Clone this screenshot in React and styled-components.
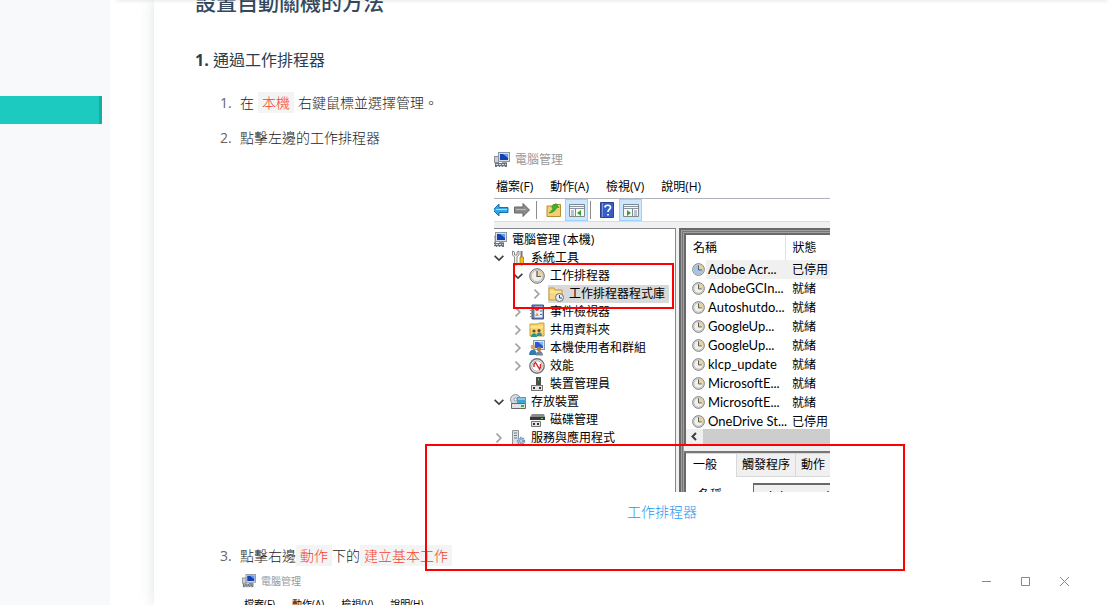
import React from 'react'
import styled, { createGlobalStyle, css } from 'styled-components'

const GlobalStyle = createGlobalStyle`
	* {
		box-sizing: border-box;
	}
	body {
		margin: 0;
		background: #fff;
		font-family: 'Open Sans', 'Noto Sans CJK TC', sans-serif;
	}
	button,
	input {
		font: inherit;
		color: inherit;
	}
	svg {
		display: block;
		flex: none;
	}
`

/* ---------- page ---------- */

const Page = styled.div`
	position: relative;
	display: flex;
	height: 100vh;
	overflow: hidden;
`

const TopShadow = styled.div`
	position: absolute;
	top: -4px;
	left: 116px;
	right: 0;
	height: 4px;
	box-shadow: 0 0 5px rgba(0, 0, 0, 0.14);
	z-index: 2;
`

const Sidebar = styled.nav`
	flex: none;
	width: 110px;
	padding: 96px 8px 0 0;
	background: #f7f9fb;
`

const ActiveLink = styled.a`
	display: block;
	height: 28px;
	background: #1ccac0;
	border-right: 3px solid #1aaba2;
`

const Article = styled.main`
	flex: 1;
	min-width: 0;
	margin-left: 44px;
	padding: 0 24px 0 41px;
	background: #fff;
	box-shadow: 0 0 14px rgba(50, 80, 80, 0.16);
`

const Title = styled.h2`
	margin: -12px 0 0;
	font-size: 21px;
	line-height: 28px;
	font-weight: 500;
	color: #34495e;
`

const Subtitle = styled.h3`
	margin: 32px 0 0;
	font-size: 16px;
	line-height: 24px;
	font-weight: 400;
	color: #2c3e50;

	b {
		font-weight: 700;
	}
`

const Steps = styled.ol`
	margin: 20px 0 0;
	padding: 0 0 0 25px;
	list-style: none;
	counter-reset: step;
`

const Step = styled.li`
	display: flex;
	counter-increment: step;
	font-size: 14px;
	line-height: 22px;
	font-weight: 300;
	color: #222;
	margin-bottom: ${(p) => p.$gap || 0}px;

	&::before {
		content: counter(step) '.';
		flex: none;
		width: 20px;
		font-weight: 400;
		color: #666;
	}
`

const StepBody = styled.div`
	flex: 1;
	min-width: 0;
`

const Code = styled.code`
	padding: 1px 4px;
	margin: 0 ${(p) => (p.$spaced ? 4 : 0)}px;
	background: #f3f4f4;
	color: #f5412f;
	font-family: inherit;
`

const Figure = styled.figure`
	display: flex;
	flex-direction: column;
	align-items: center;
	margin: 0;
`

const Caption = styled.figcaption`
	margin-top: 6px;
	line-height: 28px;
	color: #1e98f0;
`

const Shot = styled.div`
	position: relative;
	width: 336px;
`

const Mark = styled.div`
	position: absolute;
	left: ${(p) => p.$x}px;
	top: ${(p) => p.$y}px;
	width: ${(p) => p.$w}px;
	height: ${(p) => p.$h}px;
	border: 2px solid #f00;
	pointer-events: none;
`

/* ---------- management console ---------- */

const Window = styled.div`
	display: flex;
	flex-direction: column;
	height: 343px;
	overflow: hidden;
	background: #fff;
	color: #000;
	font-size: 12px;
	line-height: 18px;
	font-weight: 400;
`

const TitleBar = styled.div`
	display: flex;
	align-items: center;
	gap: 5px;
	height: ${(p) => (p.$small ? 28 : 22)}px;
	padding-left: ${(p) => (p.$small ? 2 : 0)}px;
	color: #999;
	font-size: ${(p) => (p.$small ? 10 : 12)}px;
	font-weight: 400;
`

const Menu = styled.div`
	display: flex;
	align-items: center;
	gap: 17px;
	height: ${(p) => (p.$small ? 18 : 27)}px;
	padding: ${(p) => (p.$small ? '0 0 0 4px' : '4px 0 0 2px')};
	font-size: ${(p) => (p.$small ? 10 : 12)}px;
	font-weight: 400;
	color: #000;
`

const MenuItem = styled.button`
	padding: 0;
	border: 0;
	background: none;
	white-space: nowrap;
`

const Toolbar = styled.div`
	display: flex;
	align-items: center;
	height: 24px;
	border-top: 1px solid #aeb0ba;
	border-bottom: 1px solid #dcdcdc;
`

const Tool = styled.button`
	display: flex;
	align-items: center;
	justify-content: center;
	width: ${(p) => p.$w || 23}px;
	height: 22px;
	padding: 0;
	border: 1px solid ${(p) => (p.$on ? '#99d1ff' : 'transparent')};
	background: ${(p) => (p.$on ? '#cce8ff' : 'none')};
`

const Divider = styled.span`
	width: 1px;
	height: 18px;
	margin: 0 ${(p) => p.$right}px 0 ${(p) => p.$left}px;
	background: #8c8c8c;
`

const Panes = styled.div`
	display: flex;
	flex: 1;
	min-height: 0;
	padding-top: 6px;
	background: #f0f0f0;
`

const Tree = styled.ul`
	flex: none;
	width: 182px;
	margin: 0;
	padding: 2px 0 0;
	list-style: none;
	background: #fff;
	border-top: 1px solid #828790;
	border-right: 1px solid #828790;
`

const TreeRow = styled.li`
	display: flex;
	align-items: center;
	height: 18px;
	margin-left: -3px;
	padding-left: ${(p) => Math.max(p.$level - 1, 0) * 19}px;
	white-space: nowrap;
`

const Twisty = styled.span`
	flex: none;
	display: flex;
	justify-content: center;
	width: 16px;
	margin-right: 3px;
`

const Node = styled.span`
	display: flex;
	align-items: center;
	gap: 5px;
	height: 18px;
	${(p) =>
		p.$selected &&
		css`
			background: #d9d9d9;
			padding-right: 4px;
		`}
`

const Detail = styled.div`
	flex: 1;
	min-width: 0;
	display: flex;
	flex-direction: column;
	margin-left: 3px;
	border-left: 2px solid #696969;
	border-top: 2px solid #696969;
`

const Bevel = styled.div`
	flex: 1;
	min-height: 0;
	display: flex;
	flex-direction: column;
	padding: 5px 0 0 5px;
	background: #fff;
	box-shadow: inset 1px 1px #a0a0a0, inset 2px 2px #777, inset 3px 3px #a0a0a0,
		inset 5px 5px #696969;
`

const Tasks = styled.table`
	width: 100%;
	table-layout: fixed;
	border-collapse: collapse;
	font-size: 13px;
	font-family: Lato, 'Noto Sans CJK TC', sans-serif;

	th {
		height: 25px;
		padding: 0 0 0 7px;
		font-size: 12px;
		font-weight: 400;
		text-align: left;
	}
	th:first-child {
		width: 99px;
		border-right: 1px solid #e0e0e0;
	}
	td {
		height: 19px;
		padding: 0 0 0 6px;
		line-height: 19px;
		white-space: nowrap;
	}
	td + td {
		padding-left: 7px;
		font-size: 12px;
	}
`

const TaskRow = styled.tr`
	td + td,
	td span {
		background: ${(p) => (p.$selected ? '#f0f0f0' : 'none')};
	}
`

const TaskName = styled.div`
	display: flex;
	align-items: center;
	gap: 1px;

	span {
		flex: 1;
		padding-left: 2px;
	}
`

const ScrollBar = styled.div`
	flex: none;
	display: flex;
	align-items: center;
	height: 15px;
	margin-top: -2px;
	background: #f0f0f0;

	svg {
		margin: 0 4px;
	}
`

const Thumb = styled.div`
	flex: 1;
	align-self: stretch;
	background: #cdcdcd;
`

const Splitter = styled.div`
	flex: none;
	height: 9px;
	margin-left: -2px;
	background: #f0f0f0;
	border-top: 1px solid #fff;
	border-bottom: 2px solid #777;
`

const Tabs = styled.div`
	flex: none;
	display: flex;
	align-items: flex-start;
	height: 30px;
`

const Tab = styled.button`
	flex: none;
	height: 24px;
	padding: 0 5px;
	border: 1px solid #d9d9d9;
	border-left-width: 0;
	background: #f0f0f0;
	line-height: 20px;
	${(p) =>
		p.$active &&
		css`
			width: 51px;
			padding: 0 0 2px 7px;
			text-align: left;
			background: #fff;
			border-bottom: 0;
		`}
`

const Field = styled.label`
	display: flex;
	flex: none;
	align-items: center;
	padding-left: 12px;
	white-space: nowrap;

	input {
		flex: none;
		width: 120px;
		height: 24px;
		margin-left: 31px;
		padding: 0 2px;
		border: 1px solid #696969;
		border-width: 2px 1px 1px;
		background: #f0f0f0;
		font-size: 13px;
	}
`

const Caret = styled.div`
	display: flex;
	align-items: center;
	justify-content: space-between;
`

const WindowButtons = styled.div`
	display: flex;
	align-items: center;
	gap: 28px;
	padding-right: 14px;
	color: #888;

	button {
		padding: 0;
		border: 0;
		background: none;
	}
`

/* ---------- icons ---------- */

const Svg = ({ size = 16, children }) => (
	<svg width={size} height={size} viewBox='0 0 16 16' fill='none' aria-hidden='true'>
		{children}
	</svg>
)

const ComputerIcon = ({ size }) => (
	<Svg size={size}>
		<rect x='4.5' y='.5' width='11' height='9' fill='#d9dde4' stroke='#8d96a4' />
		<rect x='6' y='2' width='8' height='6' fill='#1440b4' />
		<path d='M9 2h5v4z' fill='#5ea0f0' />
		<path d='M8 10h5v2H8z' fill='#9aa2ae' />
		<rect x='.5' y='4.5' width='4' height='6' fill='#ccd1d8' stroke='#89919e' />
		<path d='M1 11h12v4H1z' fill='#68717d' />
		<path d='M2 12.5h10M3 14.5h8' stroke='#d8dde2' strokeDasharray='2 1' />
	</Svg>
)

const ToolsIcon = () => (
	<Svg>
		<path d='M2.5 1v4l2 2v8h2.500V7l2-2V1L7 2v3H4.500V2z' fill='#eee' stroke='#777' strokeWidth='.8' />
		<path d='M11.5 1v6' stroke='#777' strokeWidth='2' />
		<path d='M10 7h3.5v7l-2 1.5L10 14z' fill='#f4bd18' stroke='#a87509' strokeWidth='.7' />
	</Svg>
)

const ClockIcon = ({ size = 16, face = '#f3f0e8' }) => (
	<Svg size={size}>
		<circle cx='8' cy='8' r='7.3' fill='#d4d4d4' stroke='#777' />
		<circle cx='8' cy='8' r='5.6' fill={face} stroke='#aaa' strokeWidth='.6' />
		<path d='M8 8V2.4A5.6 5.6 0 0 1 13.6 8z' fill='#f1d28c' />
		<path d='M8 3v5.5h4' stroke='#4c5a6b' strokeWidth='1.2' />
	</Svg>
)

const FolderClockIcon = () => (
	<Svg>
		<path d='M1 2h5l1 2h7v10H1z' fill='#f7d680' stroke='#c99b38' />
		<path d='M1.5 6h12' stroke='#fff0b8' />
		<circle cx='11.5' cy='11.5' r='4' fill='#e9edf0' stroke='#66717d' />
		<path d='M11.5 9v3h2.5' stroke='#35485d' />
	</Svg>
)

const EventIcon = () => (
	<Svg>
		<path d='M3 1h11.500v14H3z' fill='#5d78b8' stroke='#41578c' />
		<path d='M5.500 2.500h8v11h-8z' fill='#eef2f8' />
		<path d='M1 3.500h3M1 6.500h3M1 9.500h3M1 12.500h3' stroke='#888' />
		<circle cx='8' cy='5' r='2' fill='#d53232' />
		<path d='M8 8.500l2 3.500H6z' fill='#e4a51f' />
		<path d='M11 4.500h2M11 7h2M11 10.500h2' stroke='#3e62b6' />
	</Svg>
)

const SharedIcon = () => (
	<Svg>
		<path d='M1 2h8l1-1h5v13H1z' fill='#f7d66c' stroke='#c99d35' />
		<path d='M1 5h13' stroke='#fff1b5' />
		<circle cx='5' cy='9' r='1.6' fill='#6b4a2c' />
		<circle cx='10' cy='8.5' r='1.6' fill='#6b4a2c' />
		<path d='M2 15c0-5 6-5 6 0z' fill='#289b79' />
		<path d='M7.5 14c0-5 5.5-5 5.5 0z' fill='#3689b9' />
	</Svg>
)

const UsersIcon = () => (
	<Svg>
		<rect x='4.5' y='.5' width='11' height='9' fill='#d8e3f2' stroke='#8797b0' />
		<path d='M6 2h8v6H6z' fill='#2859c4' />
		<path d='M9 2h5v4z' fill='#82b6ef' />
		<circle cx='4' cy='7' r='2.3' fill='#d5a465' />
		<circle cx='10' cy='9' r='2.2' fill='#b47b45' />
		<path d='M0 15c0-7 8-7 8 0z' fill='#317bb6' />
		<path d='M7 15.5c0-6 7-6 7 0z' fill='#74829a' />
	</Svg>
)

const PerfIcon = () => (
	<Svg>
		<circle cx='8' cy='8' r='7.2' fill='#eee' stroke='#777' strokeWidth='1.4' />
		<circle cx='8' cy='8' r='5.200' fill='#fff' stroke='#b6b6b6' />
		<path d='M5 9V6l1.500-1.500 4 6.500 1-2V6' stroke='#d22626' strokeWidth='1.400' />
	</Svg>
)

const DeviceIcon = () => (
	<Svg>
		<path d='M7 1h5v9H7z' fill='#4c4c4c' />
		<path d='M9.5 2.5v2' stroke='#65d65f' />
		<rect x='2.5' y='9.5' width='11' height='5' fill='#e6e6e6' stroke='#777' />
		<path d='M4 12h2M10 12h2' stroke='#333' strokeWidth='2' />
	</Svg>
)

const StorageIcon = () => (
	<Svg>
		<circle cx='5.5' cy='5.5' r='5' fill='#d4dce2' stroke='#87939d' />
		<circle cx='5.5' cy='5.5' r='1.5' fill='#fff' stroke='#87939d' />
		<path d='M7 3h9v6H7z' fill='#39a7d2' />
		<path d='M8 5h7' stroke='#d6f2ff' />
		<path d='M1.5 9.5h14v5h-14z' fill='#e2e2e2' stroke='#686868' />
		<path d='M11 12h3' stroke='#39b339' strokeWidth='2' />
	</Svg>
)

const DiskIcon = () => (
	<Svg>
		<path d='M3 2h12l1 3H1z' fill='#8b8b8b' />
		<path d='M1 5h15v3H1z' fill='#383838' />
		<path d='M12 6.5h2' stroke='#5de25c' />
		<path d='M2.5 9.5h9v5h-9z' fill='#e5e5e5' stroke='#777' />
		<path d='M4 12h2M8 12h2' stroke='#333' strokeWidth='2' />
	</Svg>
)

const ServicesIcon = () => (
	<Svg>
		<path d='M2.5.5h6v14h-6z' fill='#dce1e5' stroke='#88939c' />
		<path d='M4 3h3M4 5.5h3M4 8h3' stroke='#6e7983' />
		<circle cx='11' cy='11' r='3.2' fill='#c9dcec' stroke='#6f96b8' strokeWidth='2' strokeDasharray='1.5 .8' />
		<circle cx='11' cy='11' r='1.4' fill='#fff' stroke='#6f96b8' />
	</Svg>
)

const BackIcon = () => (
	<Svg>
		<path d='M0 8l6-6v3.5h9v5H6V14z' fill='#36a4e5' stroke='#1770b0' />
		<path d='M3 7.5h11' stroke='#9dddff' />
	</Svg>
)

const ForwardIcon = () => (
	<Svg>
		<path d='M15.5 8L9 1.500v3.500H.5v6H9v3.500z' fill='#8a8a8a' stroke='#666' />
		<path d='M2 7.5h10' stroke='#bbb' />
	</Svg>
)

const UpFolderIcon = () => (
	<Svg>
		<path d='M1 4h5l1-1.5h7.5v12H1z' fill='#f3ce75' stroke='#b98b32' />
		<path
			d='M3 11c2-1 3-3 4-5L5.500 5 10 1.500l3 4-2-.3C10 8 7 11 3 11z'
			fill='#36b52d'
			stroke='#198018'
			strokeWidth='.5'
		/>
	</Svg>
)

const PaneIcon = ({ flip }) => (
	<Svg>
		<path d='M.5 2.5h15v12H.5z' fill='#f8f8f8' stroke='#808890' />
		<path d='M1 4.5h14M1 6.5h14' stroke='#8995a3' />
		<path
			d={flip ? 'M9.5 7v7M11 9h3M11 11h3M11 13h3' : 'M6.5 7v7M2 9h3M2 11h3M2 13h3'}
			stroke='#7e8995'
		/>
		<path d={flip ? 'M4 8l4 3-4 3z' : 'M12 8l-4 3 4 3z'} fill='#35a52e' />
	</Svg>
)

const HelpIcon = () => (
	<Svg>
		<path d='M1.5.5h13v15h-13z' fill='#365fc6' stroke='#274490' />
		<path d='M3.5 1v14' stroke='#7995df' />
		<path d='M6 5.500c0-3 5.500-3 5.500 0C11.500 7.500 9 7.500 9 10M9 12v1.600' stroke='#fff' strokeWidth='1.700' />
	</Svg>
)

const Chevron = ({ open }) => (
	<Svg size={10}>
		<path
			d={open ? 'M1 4.500l7 7 7-7' : 'M4 1l7 7-7 7'}
			stroke={open ? '#404040' : '#a0a0a0'}
			strokeWidth='2.600'
		/>
	</Svg>
)

const menus = ['檔案(F)', '動作(A)', '檢視(V)', '說明(H)']

const nodes = [
	{ level: 0, icon: <ComputerIcon />, label: '電腦管理 (本機)' },
	{ level: 1, open: true, icon: <ToolsIcon />, label: '系統工具' },
	{ level: 2, open: true, icon: <ClockIcon />, label: '工作排程器' },
	{ level: 3, open: false, icon: <FolderClockIcon />, label: '工作排程器程式庫', selected: true },
	{ level: 2, open: false, icon: <EventIcon />, label: '事件檢視器' },
	{ level: 2, open: false, icon: <SharedIcon />, label: '共用資料夾' },
	{ level: 2, open: false, icon: <UsersIcon />, label: '本機使用者和群組' },
	{ level: 2, open: false, icon: <PerfIcon />, label: '效能' },
	{ level: 2, icon: <DeviceIcon />, label: '裝置管理員' },
	{ level: 1, open: true, icon: <StorageIcon />, label: '存放裝置' },
	{ level: 2, icon: <DiskIcon />, label: '磁碟管理' },
	{ level: 1, open: false, icon: <ServicesIcon />, label: '服務與應用程式' },
]

const tasks = [
	['Adobe Acr...', '已停用'],
	['AdobeGCIn...', '就緒'],
	['Autoshutdo...', '就緒'],
	['GoogleUp...', '就緒'],
	['GoogleUp...', '就緒'],
	['klcp_update', '就緒'],
	['MicrosoftE...', '就緒'],
	['MicrosoftE...', '就緒'],
	['OneDrive St...', '已停用'],
]

function MenuBar({ small }) {
	return (
		<Menu $small={small}>
			{menus.map((m) => (
				<MenuItem key={m}>{m}</MenuItem>
			))}
		</Menu>
	)
}

function Console() {
	return (
		<Window>
			<TitleBar>
				<ComputerIcon /> 電腦管理
			</TitleBar>
			<MenuBar />
			<Toolbar>
				<Tool $w={14} aria-label='Back'><BackIcon /></Tool>
				<Tool $w={28} aria-label='Forward'><ForwardIcon /></Tool>
				<Divider $left={0} $right={5} />
				<Tool aria-label='Up'><UpFolderIcon /></Tool>
				<Tool $on aria-label='Console tree'><PaneIcon /></Tool>
				<Divider $left={2} $right={3} />
				<Tool $w={25} aria-label='Help'><HelpIcon /></Tool>
				<Tool $on aria-label='Action pane'><PaneIcon flip /></Tool>
			</Toolbar>
			<Panes>
				<Tree>
					{nodes.map((n) => (
						<TreeRow key={n.label} $level={n.level}>
							{n.level > 0 && <Twisty>{n.open !== undefined && <Chevron open={n.open} />}</Twisty>}
							<Node $selected={n.selected}>
								{n.icon}
								{n.label}
							</Node>
						</TreeRow>
					))}
				</Tree>
				<Detail>
					<Bevel>
						<Tasks>
							<thead>
								<tr>
									<th>名稱</th>
									<th>狀態</th>
								</tr>
							</thead>
							<tbody>
								{tasks.map(([name, state], i) => (
									<TaskRow key={i} $selected={i === 0}>
										<td>
											<TaskName>
												<ClockIcon size={13} face={i === 0 ? '#9cc8ee' : undefined} />
												<span>{name}</span>
											</TaskName>
										</td>
										<td>{state}</td>
									</TaskRow>
								))}
							</tbody>
						</Tasks>
						<ScrollBar>
							<svg width='9' height='9' viewBox='0 0 9 9' fill='none'>
								<path d='M6 1L2.500 4.500 6 8' stroke='#404040' strokeWidth='2' />
							</svg>
							<Thumb />
						</ScrollBar>
						<Splitter />
						<Tabs>
							<Tab $active>一般</Tab>
							<Tab>觸發程序</Tab>
							<Tab>動作</Tab>
						</Tabs>
						<Field>
							名稱
							<input defaultValue='Adobe Acrobat' />
						</Field>
					</Bevel>
				</Detail>
			</Panes>
		</Window>
	)
}

function NextWindow() {
	return (
		<div>
			<Caret>
				<TitleBar $small>
					<ComputerIcon size={14} /> 電腦管理
				</TitleBar>
				<WindowButtons>
					<button aria-label='Minimize'>
						<svg width='11' height='11' viewBox='0 0 11 11'>
							<path d='M1 5.500h9' stroke='currentColor' />
						</svg>
					</button>
					<button aria-label='Maximize'>
						<svg width='11' height='11' viewBox='0 0 11 11' fill='none'>
							<path d='M1.500 1.500h8v8h-8z' stroke='currentColor' />
						</svg>
					</button>
					<button aria-label='Close'>
						<svg width='11' height='11' viewBox='0 0 11 11'>
							<path d='M1 1l9 9M10 1l-9 9' stroke='currentColor' />
						</svg>
					</button>
				</WindowButtons>
			</Caret>
			<MenuBar small />
		</div>
	)
}

function App() {
	return (
		<Page>
			<GlobalStyle />
			<TopShadow />
			<Sidebar>
				<ActiveLink href='#schedule' aria-label='設置自動關機的方法' />
			</Sidebar>
			<Article>
				<Title>設置自動關機的方法</Title>
				<Subtitle>
					<b>1.</b> 通過工作排程器
				</Subtitle>
				<Steps>
					<Step $gap={13}>
						<StepBody>
							在<Code $spaced>本機</Code>右鍵鼠標並選擇管理。
						</StepBody>
					</Step>
					<Step $gap={19}>
						<StepBody>
							點擊左邊的工作排程器
							<Figure>
								<Shot>
									<Console />
									<Mark $x={19} $y={114} $w={161} $h={46} />
									<Mark $x={-69} $y={295} $w={480} $h={127} />
								</Shot>
								<Caption>工作排程器</Caption>
							</Figure>
						</StepBody>
					</Step>
					<Step>
						<StepBody>
							點擊右邊
							<Code>動作</Code>
							下的
							<Code>建立基本工作</Code>
							<NextWindow />
						</StepBody>
					</Step>
				</Steps>
			</Article>
		</Page>
	)
}

export default App
